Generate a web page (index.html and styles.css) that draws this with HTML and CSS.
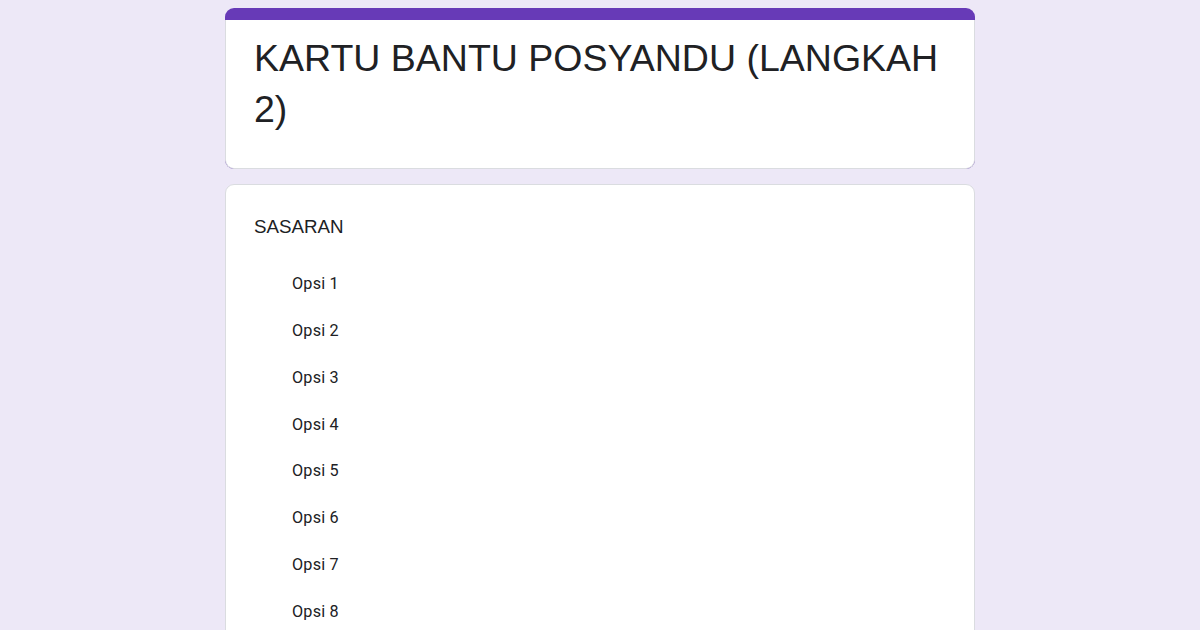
FILE: index.html
```html
<!DOCTYPE html>
<html lang="id">
<head>
<meta charset="utf-8">
<title>KARTU BANTU POSYANDU (LANGKAH 2)</title>
<link rel="stylesheet" href="styles.css">
</head>
<body>
<main class="form">
  <section class="header">
    <div class="header-body">
      <h1 class="title">KARTU BANTU POSYANDU (LANGKAH 2)</h1>
    </div>
  </section>
  <section class="card">
    <div class="question">SASARAN</div>
    <ul class="options">
      <li class="option">Opsi 1</li>
      <li class="option">Opsi 2</li>
      <li class="option">Opsi 3</li>
      <li class="option">Opsi 4</li>
      <li class="option">Opsi 5</li>
      <li class="option">Opsi 6</li>
      <li class="option">Opsi 7</li>
      <li class="option">Opsi 8</li>
    </ul>
  </section>
</main>
</body>
</html>
```
FILE: styles.css
```css
html, body {
  margin: 0;
  padding: 0;
}
body {
  background: #ede8f7;
  color: #202124;
  font-family: "Liberation Sans", Arial, sans-serif;
  overflow: hidden;
  height: 630px;
}
.form {
  width: 750px;
  margin: 0 auto;
  padding-top: 8px;
  display: flex;
  flex-direction: column;
  gap: 15px;
}
.header {
  background: #673ab7;
  border-radius: 9px;
  padding-top: 12px;
}
.header-body {
  background: #fff;
  border: 1px solid #dadce0;
  border-top: 0;
  border-radius: 0 0 9px 9px;
  padding: 13px 28px 33px 28px;
}
.title {
  margin: 0;
  font-weight: 400;
  font-size: 37.5px;
  line-height: 51px;
  color: #202124;
}
.card {
  background: #fff;
  border: 1px solid #dadce0;
  border-radius: 9px;
  padding: 27.5px 28px 20px 28px;
}
.question {
  font-size: 18.75px;
  line-height: 28px;
  color: #202124;
}
.options {
  list-style: none;
  margin: 20.4px 0 0 0;
  padding: 0 0 0 38px;
}
.option {
  font-family: Roboto, "Liberation Sans", sans-serif;
  font-size: 16.2px;
  letter-spacing: 0.2px;
  line-height: 46.9px;
  height: 46.9px;
  color: #202124;
}
```
